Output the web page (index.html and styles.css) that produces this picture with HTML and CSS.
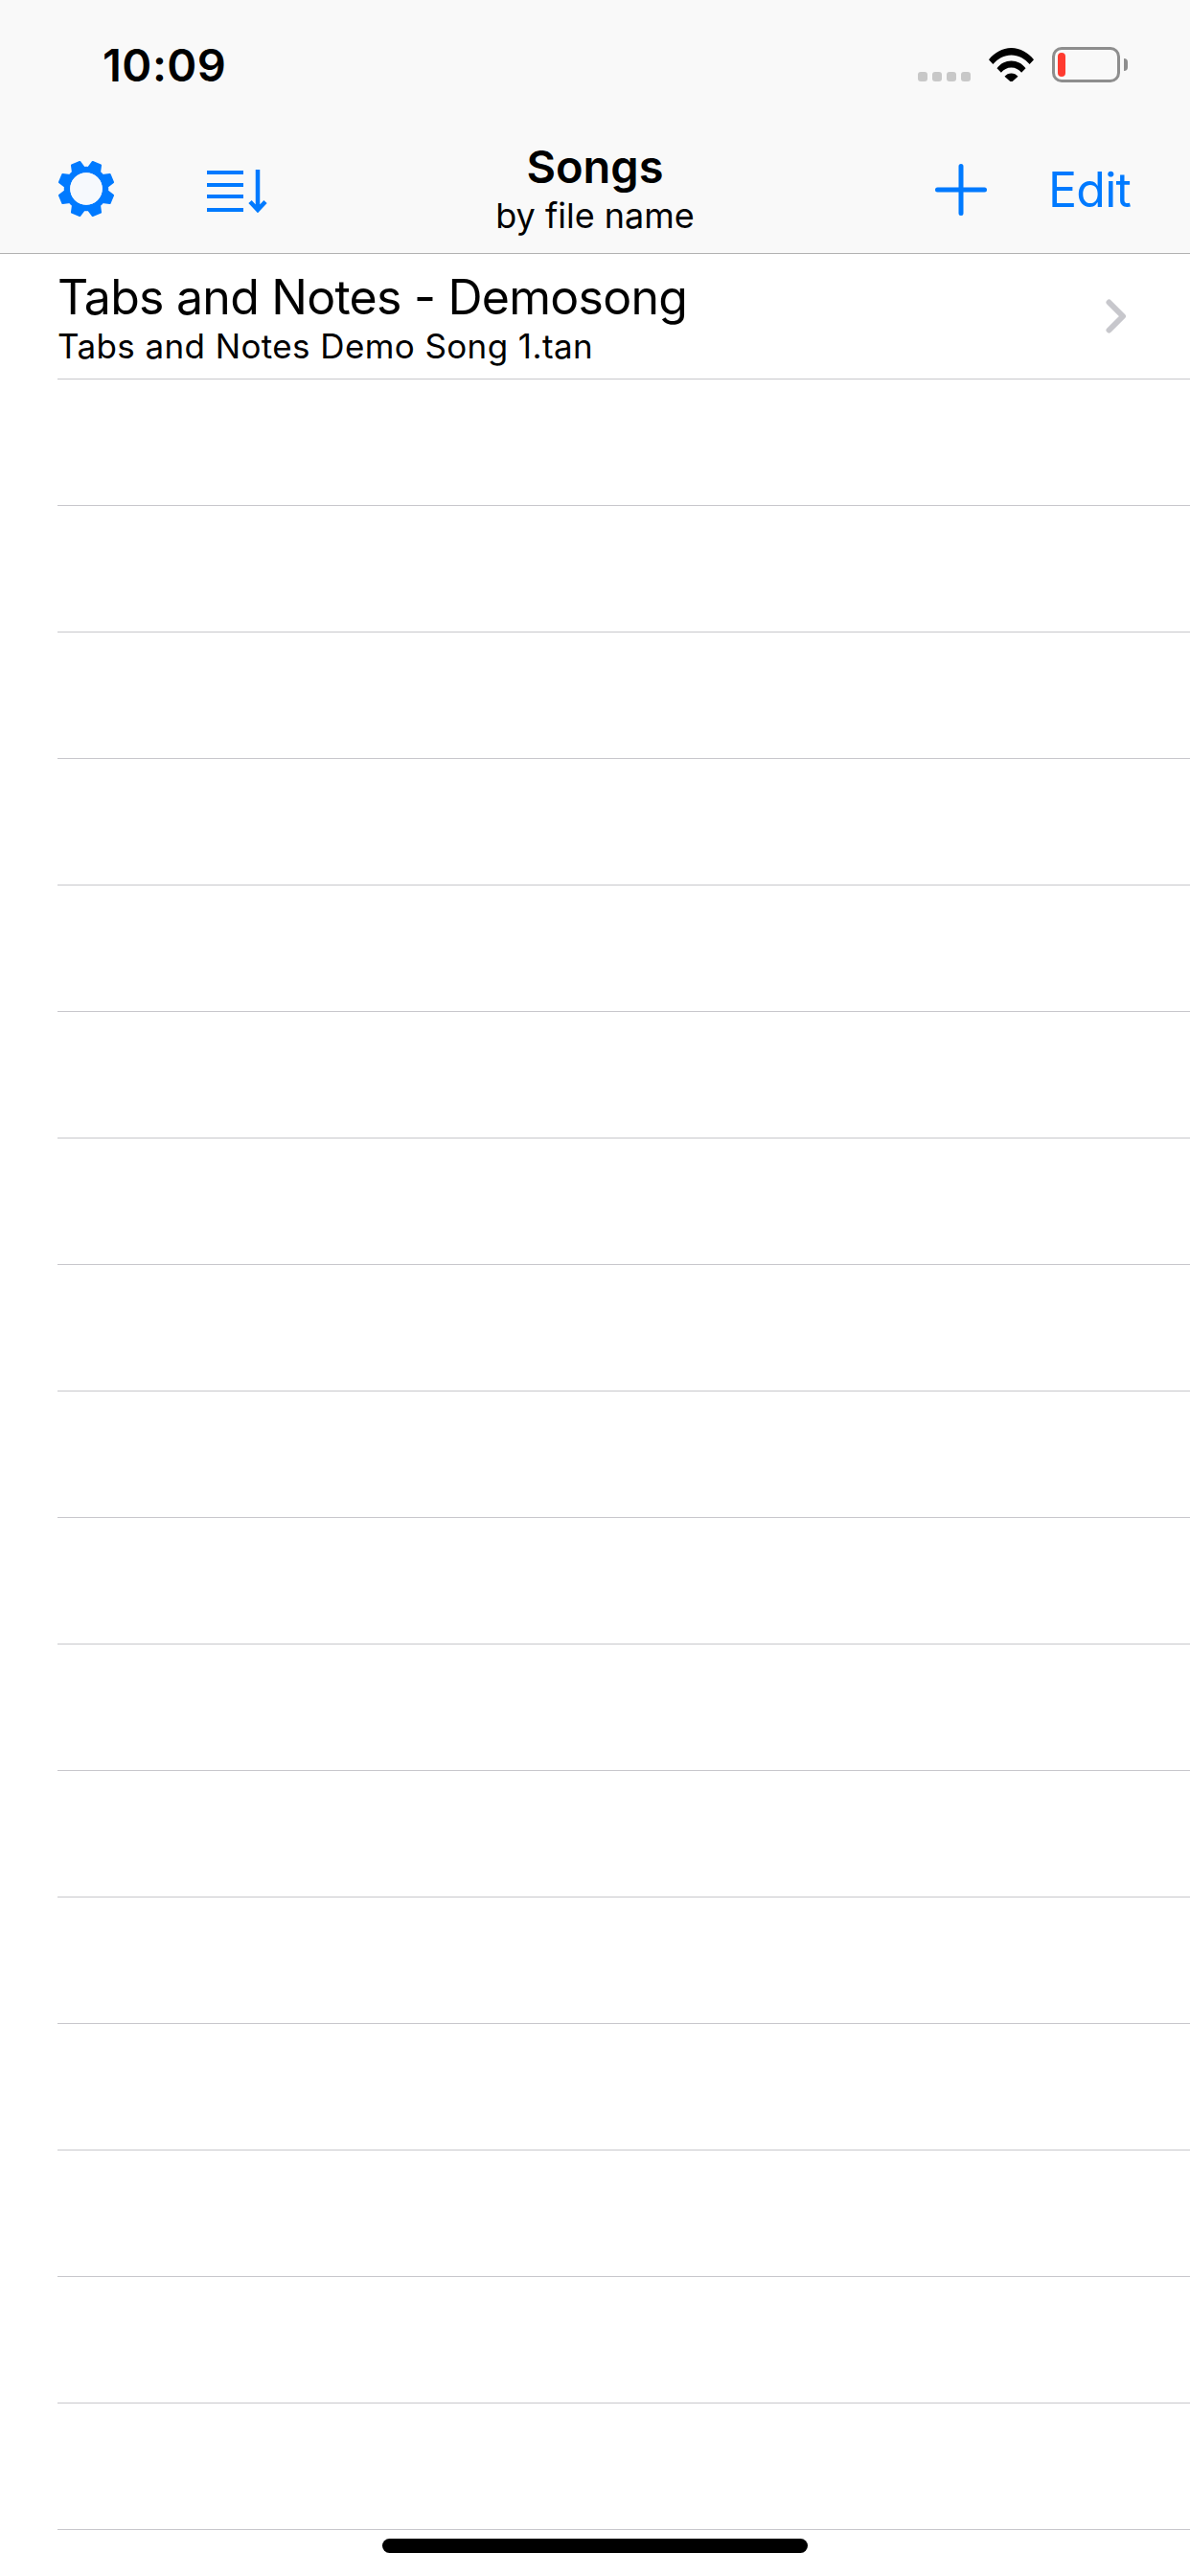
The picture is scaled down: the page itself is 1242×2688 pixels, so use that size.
FILE: index.html
```html
<!DOCTYPE html>
<html lang="en">
<head>
<meta charset="utf-8">
<title>Songs</title>
<link rel="stylesheet" href="styles.css">
</head>
<body>
<div class="screen">
  <header class="header">
    <div class="status">
      <span class="time">10:09</span>
      <div class="status-icons">
        <div class="signal"><i></i><i></i><i></i><i></i></div>
        <svg class="wifi" width="47" height="36" viewBox="0 0 47 36">
          <path d="M0 13.2C6 6 14 1 23.5 1S41 6 47 13.2L42.6 18C37.5 12 31 8.4 23.5 8.4S9.5 12 4.4 18Z" fill="#000"/>
          <path d="M8.5 22.2C12.3 17.4 17.4 14.6 23.5 14.6s11.2 2.8 15 7.6l-4.4 4.6c-2.7-3.4-6.3-5.4-10.6-5.4s-7.900 2-10.600 5.400Z" fill="#000"/>
          <path d="M16.500 30.800C18.300 28.700 20.700 27.500 23.500 27.500s5.200 1.200 7 3.300L23.500 37Z" fill="#000"/>
        </svg>
        <div class="battery"><div class="battery-level"></div></div>
        <div class="battery-nub"></div>
      </div>
    </div>
    <nav class="nav">
      <div class="nav-left">
        <svg class="gear" width="60" height="60" viewBox="0 0 60 60">
          <g fill="#007aff" stroke="#007aff" stroke-width="2" stroke-linejoin="round">
            <path d="M23 11L25.500 1.500H34.500L37 11Z" transform="rotate(22.500 30 30)"/>
            <path d="M23 11L25.500 1.500H34.500L37 11Z" transform="rotate(67.500 30 30)"/>
            <path d="M23 11L25.500 1.500H34.500L37 11Z" transform="rotate(112.500 30 30)"/>
            <path d="M23 11L25.500 1.500H34.500L37 11Z" transform="rotate(157.500 30 30)"/>
            <path d="M23 11L25.500 1.500H34.500L37 11Z" transform="rotate(202.500 30 30)"/>
            <path d="M23 11L25.500 1.500H34.500L37 11Z" transform="rotate(247.500 30 30)"/>
            <path d="M23 11L25.500 1.500H34.500L37 11Z" transform="rotate(292.500 30 30)"/>
            <path d="M23 11L25.500 1.500H34.500L37 11Z" transform="rotate(337.500 30 30)"/>
          </g>
          <circle cx="30" cy="30" r="20" fill="none" stroke="#007aff" stroke-width="6.500"/>
          <circle cx="30" cy="30" r="16.800" fill="#f6f9fd"/>
        </svg>
        <svg class="sort" width="64" height="46" viewBox="0 0 64 46">
          <g fill="#007aff">
            <rect x="0" y="2" width="38" height="4"/>
            <rect x="0" y="15" width="38" height="4"/>
            <rect x="0" y="27" width="38" height="4"/>
            <rect x="0" y="41" width="38" height="4"/>
          </g>
          <path d="M53 1V43M45 34.500L53 43L61 34.500" fill="none" stroke="#007aff" stroke-width="4.500"/>
        </svg>
      </div>
      <div class="nav-title">
        <div class="title">Songs</div>
        <div class="subtitle">by file name</div>
      </div>
      <div class="nav-right">
        <svg class="plus" width="54" height="54" viewBox="0 0 54 54">
          <path d="M27 2.500V51.500M2.500 27H51.500" fill="none" stroke="#007aff" stroke-width="5" stroke-linecap="round"/>
        </svg>
        <span class="edit">Edit</span>
      </div>
    </nav>
  </header>
  <main class="list">
    <div class="row row-song">
      <div class="song-text">
        <div class="song-title">Tabs and Notes - Demosong</div>
        <div class="song-file">Tabs and Notes Demo Song 1.tan</div>
      </div>
      <svg class="chevron" width="22" height="36" viewBox="0 0 22 36">
        <path d="M3.500 3.500L18 18L3.500 32.500" fill="none" stroke="#c7c7cc" stroke-width="6" stroke-linecap="round" stroke-linejoin="round"/>
      </svg>
    </div>
    <div class="row"></div><div class="row"></div><div class="row"></div><div class="row"></div>
    <div class="row"></div><div class="row"></div><div class="row"></div><div class="row"></div>
    <div class="row"></div><div class="row"></div><div class="row"></div><div class="row"></div>
    <div class="row"></div><div class="row"></div><div class="row"></div><div class="row"></div>
    <div class="row"></div>
  </main>
  <div class="home-indicator"></div>
</div>
</body>
</html>
```
FILE: styles.css
```css
* { box-sizing: border-box; }
html, body { margin: 0; padding: 0; background: #fff; }
body { font-family: Inter, "Liberation Sans", sans-serif; color: #000; }

.screen {
  position: relative;
  width: 1242px;
  height: 2688px;
  overflow: hidden;
  background: #fff;
}

.header {
  height: 265px;
  background: #f9f9f9;
  border-bottom: 1px solid #b2b2b2;
}

.status {
  height: 132px;
  padding: 49px 65px 0 107px;
  display: flex;
  justify-content: space-between;
  align-items: flex-start;
}
.time {
  font-size: 47px;
  font-weight: 600;
  line-height: 36px;
  letter-spacing: 0.5px;
  margin-top: 1px;
}
.status-icons {
  display: flex;
  align-items: flex-start;
}
.signal {
  display: flex;
  gap: 5px;
  margin: 26px 19px 0 0;
}
.signal i {
  display: block;
  width: 10px;
  height: 10px;
  border-radius: 3px;
  background: #c8c8c8;
}
.wifi { display: block; margin-right: 19px; }
.battery {
  width: 71px;
  height: 37px;
  padding: 3px 0 0 3px;
  border: 3px solid #8e8e8e;
  border-radius: 10px;
}
.battery-level {
  width: 8px;
  height: 25px;
  border-radius: 4px;
  background: #ff3b30;
}
.battery-nub {
  width: 4px;
  height: 13px;
  margin: 12px 0 0 4px;
  background: #8e8e8e;
  border-radius: 0 6px 6px 0;
}

.nav {
  height: 132px;
  display: grid;
  grid-template-columns: 1fr auto 1fr;
  align-items: start;
}
.nav-left {
  display: flex;
  align-items: flex-start;
  gap: 96px;
  padding: 35px 0 0 60px;
}
.sort { display: block; margin-top: 9px; }
.gear { display: block; }
.nav-title { text-align: center; padding-top: 15px; }
.title {
  font-size: 47px;
  font-weight: 600;
  line-height: 54px;
}
.subtitle {
  font-size: 36px;
  line-height: 46px;
  margin-top: 1px;
}
.nav-right {
  display: flex;
  justify-content: flex-end;
  align-items: flex-start;
  gap: 64px;
  padding: 39px 62px 0 0;
}
.plus { display: block; }
.edit {
  color: #007aff;
  font-size: 50px;
  line-height: 60px;
  letter-spacing: -0.8px;
  margin-top: -3px;
}

.row {
  height: 132px;
  margin-left: 60px;
  border-bottom: 1px solid #c8c7cc;
}
.row-song {
  height: 131px;
  display: flex;
  justify-content: space-between;
  padding-right: 66px;
}
.song-text { padding-top: 15px; }
.song-title {
  font-size: 50px;
  line-height: 60px;
  letter-spacing: -0.75px;
}
.song-file {
  font-size: 35px;
  line-height: 42px;
  letter-spacing: 0.4px;
}
.chevron { display: block; margin-top: 47px; }

.home-indicator {
  position: absolute;
  left: 399px;
  top: 2649px;
  width: 444px;
  height: 15px;
  border-radius: 8px;
  background: #000;
}
```
